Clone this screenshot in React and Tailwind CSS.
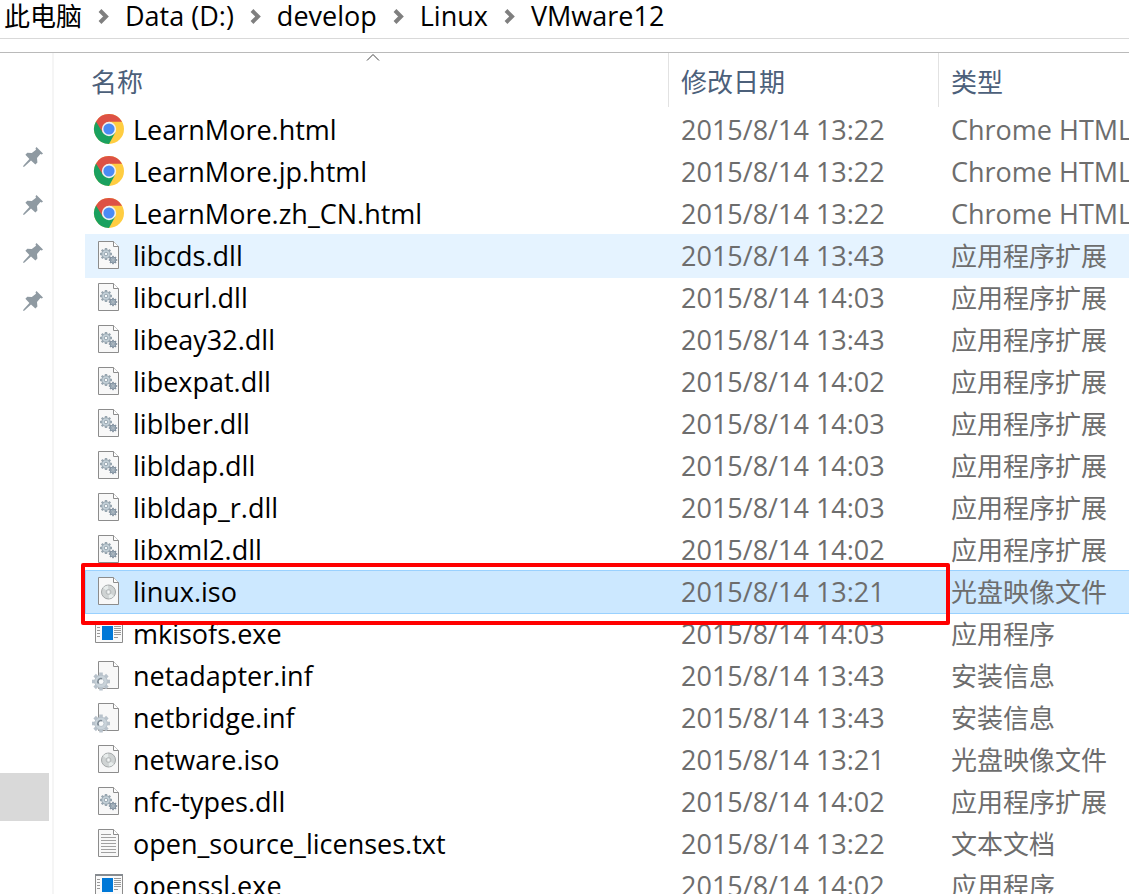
import { Fragment } from "react";

const crumbs = ["此电脑", "Data (D:)", "develop", "Linux", "VMware12"];

const pinned = ["desktop", "downloads", "documents", "pictures"];

const files = [
  { name: "LearnMore.html", date: "2015/8/14 13:22", type: "Chrome HTML", icon: "chrome" },
  { name: "LearnMore.jp.html", date: "2015/8/14 13:22", type: "Chrome HTML", icon: "chrome" },
  { name: "LearnMore.zh_CN.html", date: "2015/8/14 13:22", type: "Chrome HTML", icon: "chrome" },
  { name: "libcds.dll", date: "2015/8/14 13:43", type: "应用程序扩展", icon: "dll", state: "hover" },
  { name: "libcurl.dll", date: "2015/8/14 14:03", type: "应用程序扩展", icon: "dll" },
  { name: "libeay32.dll", date: "2015/8/14 13:43", type: "应用程序扩展", icon: "dll" },
  { name: "libexpat.dll", date: "2015/8/14 14:02", type: "应用程序扩展", icon: "dll" },
  { name: "liblber.dll", date: "2015/8/14 14:03", type: "应用程序扩展", icon: "dll" },
  { name: "libldap.dll", date: "2015/8/14 14:03", type: "应用程序扩展", icon: "dll" },
  { name: "libldap_r.dll", date: "2015/8/14 14:03", type: "应用程序扩展", icon: "dll" },
  { name: "libxml2.dll", date: "2015/8/14 14:02", type: "应用程序扩展", icon: "dll" },
  { name: "linux.iso", date: "2015/8/14 13:21", type: "光盘映像文件", icon: "iso", state: "selected" },
  { name: "mkisofs.exe", date: "2015/8/14 14:03", type: "应用程序", icon: "exe" },
  { name: "netadapter.inf", date: "2015/8/14 13:43", type: "安装信息", icon: "inf" },
  { name: "netbridge.inf", date: "2015/8/14 13:43", type: "安装信息", icon: "inf" },
  { name: "netware.iso", date: "2015/8/14 13:21", type: "光盘映像文件", icon: "iso" },
  { name: "nfc-types.dll", date: "2015/8/14 14:02", type: "应用程序扩展", icon: "dll" },
  { name: "open_source_licenses.txt", date: "2015/8/14 13:22", type: "文本文档", icon: "txt" },
  { name: "openssl.exe", date: "2015/8/14 14:02", type: "应用程序", icon: "exe" },
];

const rowStyles = {
  hover: "bg-[#e5f3ff] outline-1 outline-[#e5f3ff]",
  selected: "relative z-10 bg-[#cce8ff] outline-1 outline-[#99d1ff]",
};

// Han glyphs are set one pixel smaller than the Latin ones
function textSize(text) {
  return /[\u4e00-\u9fff]/.test(text) ? "text-[26px]" : "text-[27px]";
}

function Page() {
  return (
    <>
      <path d="M4.5 1.5H19.5L24.5 6.5V28.5H4.5Z" fill="#f8f8f8" stroke="#8c8c8c" />
      <path d="M19.5 1.5V6.5H24.5" fill="#fff" stroke="#8c8c8c" />
    </>
  );
}

function Gear({ x, y, r, hole, color, fill }) {
  const teeth = [0, 45, 90, 135];
  return (
    <g transform={`translate(${x} ${y})`}>
      {teeth.map((angle) => (
        <rect
          key={angle}
          x={-r * 0.2}
          y={-r}
          width={r * 0.4}
          height={r * 2}
          fill={color}
          transform={`rotate(${angle})`}
        />
      ))}
      <circle r={r * 0.7} fill={fill} stroke={color} />
      <circle r={hole} fill="#f8fafb" stroke={color} />
    </g>
  );
}

function FileIcon({ kind }) {
  return (
    <svg viewBox="0 0 30 30" className="mb-[2px] size-[30px] shrink-0 overflow-visible" aria-hidden="true">
      {kind === "chrome" && (
        <>
          <circle cx="15" cy="15" r="15" fill="#ffcd41" />
          <path d="M15 15L2 7.5A15 15 0 0 0 15 30L21.3 18.6Z" fill="#1aa15f" />
          <path d="M15 15L8.7 18.6L2 7.5A15 15 0 0 1 28 7.7H15Z" fill="#dd5145" />
          <circle cx="15" cy="15" r="7.2" fill="#f1f1f1" />
          <circle cx="15" cy="15" r="5.6" fill="#4b8bf5" />
        </>
      )}
      {kind === "dll" && (
        <>
          <Page />
          <Gear x={12} y={14} r={6} hole={1.8} color="#97a5af" fill="#c6d3db" />
          <Gear x={19} y={20} r={4.2} hole={1.2} color="#8492a0" fill="#a9bac5" />
        </>
      )}
      {kind === "iso" && (
        <>
          <Page />
          <circle cx="14.5" cy="16" r="7" fill="#cfd3d3" stroke="#a3a7a8" />
          <path d="M14.5 16L9 12A7 7 0 0 1 14 9.4ZM14.5 16L20 20A7 7 0 0 1 15 22.6Z" fill="#e7eceb" />
          <circle cx="14.5" cy="16" r="2.4" fill="#dfe3e3" stroke="#b3b7b8" />
          <circle cx="14.5" cy="16" r="0.8" fill="#fff" />
        </>
      )}
      {kind === "inf" && (
        <>
          <Page />
          <Gear x={7} y={21.5} r={9} hole={3} color="#b8c2cb" fill="#c9d3da" />
          <path d="M4.6 23.4A3 3 0 0 1 8 18.7" fill="none" stroke="#7f8b95" strokeWidth="1.6" />
        </>
      )}
      {kind === "txt" && (
        <>
          <Page />
          <path d="M7 6.5H17M7 9.5H22M7 12.5H22M7 15.5H22M7 18.5H22M7 21.5H22M7 24.5H22" stroke="#a0a0a0" />
        </>
      )}
      {kind === "exe" && (
        <>
          <path d="M1.5 4.5H28.5V24.5H1.5Z" fill="#fafafa" stroke="#8c8c8c" />
          <path d="M1 4H29V6H1Z" fill="#868b90" />
          <path d="M8 8H19V22H8Z" fill="#0078d7" />
          <path d="M3 9.5H6M3 12.5H6M3 15.5H6M3 18.5H6M20 8.5H27M20 10.5H27M20 12.5H27M20 14.5H27M20 16.5H27M20 19.5H24" stroke="#999" />
        </>
      )}
    </svg>
  );
}

function Pin() {
  return (
    <svg viewBox="0 0 20 20" className="size-5" fill="#8f9aa2" aria-hidden="true">
      <path d="M13.5 0L20 6.5L18.8 7.4L17.4 7L14 11L14.4 15.5L12.4 17.6L8 13.6L1.5 19.5L0 20L0.5 18.5L6.4 12L2.4 7.8L4.3 5.8L8.8 6L13 2.7L12.5 1.2Z" />
    </svg>
  );
}

function Breadcrumbs() {
  return (
    <nav
      aria-label="路径"
      className="flex h-[39px] items-center gap-4 border-b border-[#d9d9d9] pb-[6px] pl-1 leading-8 whitespace-nowrap text-black"
    >
      {crumbs.map((crumb, i) => (
        <Fragment key={crumb}>
          {i > 0 && (
            <svg viewBox="0 0 11 16" className="h-4 w-[11px] shrink-0" fill="none" stroke="#7f7f7f" strokeWidth="4" aria-hidden="true">
              <path d="M2 2.5L8 8.5L2 14.5" />
            </svg>
          )}
          <button type="button" className={textSize(crumb)}>{crumb}</button>
        </Fragment>
      ))}
    </nav>
  );
}

function FileRow({ file }) {
  return (
    <tr className={rowStyles[file.state]}>
      <td className="h-[42px] p-0 align-top">
        <div className="flex h-[42px] items-center gap-[9px] pl-2 text-black">
          <FileIcon kind={file.icon} />
          <span className={textSize(file.name)}>{file.name}</span>
        </div>
        {file.state === "selected" && (
          <span className="pointer-events-none absolute -top-2 -left-[5px] h-[62px] w-[869px] rounded-xs border-4 border-[#ff0000]" />
        )}
      </td>
      <td className="p-0 pl-[13px]">
        <span className={textSize(file.date)}>{file.date}</span>
      </td>
      <td className="p-0 pl-[13px]">
        <span className={textSize(file.type)}>{file.type}</span>
      </td>
    </tr>
  );
}

export default function App() {
  return (
    <div className="flex h-screen flex-col overflow-hidden bg-white font-['Open_Sans','Noto_Sans_CJK_SC',sans-serif] text-[26px] leading-9">
      <Breadcrumbs />
      <div className="mt-[13px] flex min-h-0 flex-1 border-t border-[#bababa]">
        <aside className="w-[54px] shrink-0 border-r-2 border-[#f5f5f5] pt-20">
          <ul>
            {pinned.map((place) => (
              <li key={place} className="flex h-12 items-center justify-end pr-[9px]">
                <Pin />
              </li>
            ))}
          </ul>
          <div className="mt-[448px] mr-[3px] h-12 bg-[#d9d9d9]" />
        </aside>
        <main className="min-w-0 flex-1 overflow-hidden pl-8">
          <table className="w-full table-fixed border-collapse text-left whitespace-nowrap text-[#6d6d6d]">
            <colgroup>
              <col className="w-[582px]" />
              <col className="w-[270px]" />
              <col />
            </colgroup>
            <thead className="text-[#4c607a]">
              <tr>
                <th className="relative h-14 p-0 pt-[2px] pl-[5px] font-normal" aria-sort="ascending">
                  <div className="absolute inset-x-0 top-0 flex justify-center pr-2">
                    <svg viewBox="0 0 14 8" className="h-2 w-[14px]" fill="none" stroke="#444" aria-hidden="true">
                      <path d="M1 7.5L7 1.5L13 7.5" />
                    </svg>
                  </div>
                  <button type="button">名称</button>
                </th>
                <th className="h-14 p-0 pb-[2px] font-normal">
                  <div className="flex h-[54px] items-center border-l border-[#e2e2e2] pt-1 pl-3">修改日期</div>
                </th>
                <th className="h-14 p-0 pb-[2px] font-normal">
                  <div className="flex h-[54px] items-center border-l border-[#e2e2e2] pt-1 pl-3">类型</div>
                </th>
              </tr>
            </thead>
            <tbody>
              {files.map((file) => (
                <FileRow key={file.name} file={file} />
              ))}
            </tbody>
          </table>
        </main>
      </div>
    </div>
  );
}
